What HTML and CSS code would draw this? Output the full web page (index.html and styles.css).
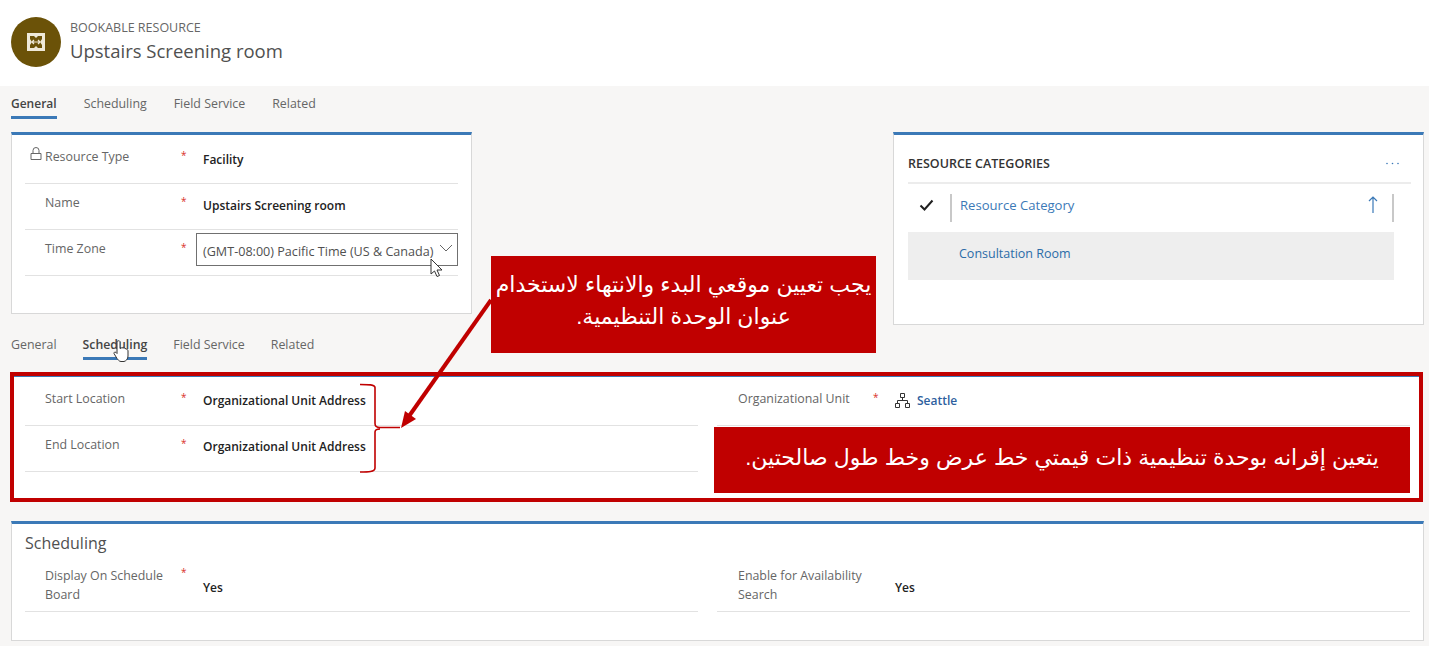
FILE: index.html
```html
<!DOCTYPE html>
<html lang="en">
<head>
  <meta charset="UTF-8">
  <title>Bookable Resource</title>
  <link rel="stylesheet" href="styles.css">
</head>
<body>

  <header class="page-header">
    <div class="avatar">
      <svg width="18" height="18" viewBox="0 0 18 18">
        <rect width="18" height="18" fill="#efe9d8"/>
        <path d="M3 3h4l2 2 2-2h4v3l-2 3 2 3v3h-4l-2-2-2 2H3v-3l2-3-2-3z" fill="#6b5208"/>
        <path d="M5 9h8M5 9l2-2M5 9l2 2M13 9l-2-2M13 9l-2 2" stroke="#efe9d8" stroke-width="1.2" fill="none"/>
      </svg>
    </div>
    <div>
      <div class="entity">BOOKABLE RESOURCE</div>
      <div class="record">Upstairs Screening room</div>
    </div>
  </header>

  <nav class="tabs">
    <span class="tab active">General</span>
    <span class="tab">Scheduling</span>
    <span class="tab">Field Service</span>
    <span class="tab">Related</span>
  </nav>

  <div class="top-row">
    <section class="card general-card">
      <div class="row">
        <svg class="lock" width="12" height="14" viewBox="0 0 12 14">
          <path d="M3 6V3.500a3 3 0 0 1 6 0V6M1 6.500h10v6H1z" fill="none" stroke="#666" stroke-width="1"/>
        </svg>
        <span class="label">Resource Type</span><span class="star">*</span><span class="value">Facility</span>
      </div>
      <div class="row">
        <span class="label">Name</span><span class="star">*</span><span class="value">Upstairs Screening room</span>
      </div>
      <div class="row">
        <span class="label">Time Zone</span><span class="star">*</span>
        <div class="select">
          <span>(GMT-08:00) Pacific Time (US &amp; Canada)</span>
          <svg width="14" height="8" viewBox="0 0 14 8"><path d="M1 1l6 6 6-6" fill="none" stroke="#666"/></svg>
        </div>
      </div>
    </section>

    <section class="card categories-card">
      <div class="cat-head">
        <span class="cat-title">RESOURCE CATEGORIES</span>
        <svg class="more" width="13" height="3" viewBox="0 0 13 3">
          <circle cx="1" cy="1.500" r=".8" fill="#3b79b7"/><circle cx="6.500" cy="1.500" r=".8" fill="#3b79b7"/><circle cx="12" cy="1.500" r=".8" fill="#3b79b7"/>
        </svg>
      </div>
      <div class="cat-columns">
        <svg class="check" width="15" height="12" viewBox="0 0 15 12"><path d="M1.500 6.500l4 4 8-9" fill="none" stroke="#1f1f1f" stroke-width="2"/></svg>
        <span class="cat-name">Resource Category</span>
        <svg class="up" width="10" height="17" viewBox="0 0 10 17"><path d="M5 17V1M1 5l4-4 4 4" fill="none" stroke="#3b79b7" stroke-width="1.200"/></svg>
      </div>
      <div class="cat-item">Consultation Room</div>
    </section>
  </div>

  <nav class="tabs tabs-second">
    <span class="tab">General</span>
    <span class="tab active">Scheduling</span>
    <span class="tab">Field Service</span>
    <span class="tab">Related</span>
  </nav>

  <section class="locations">
    <div class="col">
      <div class="row">
        <span class="label">Start Location</span><span class="star">*</span><span class="value">Organizational Unit Address</span>
      </div>
      <div class="row">
        <span class="label">End Location</span><span class="star">*</span><span class="value">Organizational Unit Address</span>
      </div>
    </div>
    <div class="col">
      <div class="row row-right">
        <span class="label">Organizational Unit</span><span class="star">*</span>
        <span class="value link">
          <svg width="15" height="15" viewBox="0 0 15 15"><path d="M5.500 .5h4v4h-4zM.5 10.500h4v4h-4zM10.500 10.500h4v4h-4zM7.500 4.500v3M2.500 10.500v-3h10v3" fill="none" stroke="#333"/></svg>
          Seattle
        </span>
      </div>
    </div>
  </section>

  <section class="card scheduling-card">
    <h2>Scheduling</h2>
    <div class="two-cols">
      <div class="row tall">
        <span class="label">Display On Schedule Board</span><span class="star">*</span><span class="value">Yes</span>
      </div>
      <div class="row tall row-right">
        <span class="label">Enable for Availability Search</span><span class="star"></span><span class="value">Yes</span>
      </div>
    </div>
  </section>

  <!-- annotations drawn over the form -->
  <div class="callout callout-top" dir="rtl" lang="ar">يجب تعيين موقعي البدء والانتهاء لاستخدام<br>عنوان الوحدة التنظيمية.</div>
  <div class="callout callout-bottom" dir="rtl" lang="ar">يتعين إقرانه بوحدة تنظيمية ذات قيمتي خط عرض وخط طول صالحتين.</div>

  <svg class="overlay" width="1429" height="646" viewBox="0 0 1429 646">
    <!-- bracket -->
    <path d="M360 384.500c8 0 15 0 15 3v36c0 3 2 4 5 4h20M380 429c-3 0-5 1-5 3v36c0 4-7 4-15 4" fill="none" stroke="#c00000" stroke-width="1.600"/>
    <!-- arrow -->
    <path d="M491 300L407 419" stroke="#c00000" stroke-width="4" fill="none"/>
    <path d="M401 428l4-17 11 8z" fill="#c00000"/>
    <!-- pointer -->
    <path d="M431 259v15l3.500-3 2.500 5.500 2.500-1-2.500-5.500h5z" fill="#fff" stroke="#333"/>
    <!-- hand -->
    <path d="M117 341.500c1-1 2.500-1 3 0v7c1-1 5-1 6 .5 1 0 2 1 2 2v5c0 3-2 5-4 5.500h-3c-2 0-3-2-4-3l-3-5c-.5-1 1-2 2-1l1 1z" fill="#fff" stroke="#333"/>
  </svg>

</body>
</html>
```

FILE: styles.css
```css
body {
  margin: 0;
  width: 1429px;
  height: 646px;
  overflow: hidden;
  position: relative;
  background: #f7f6f5;
  font-family: "Open Sans", sans-serif;
  font-size: 12.4px;
  color: #666;
}

.page-header {
  height: 86px;
  background: #fff;
  display: flex;
  align-items: flex-start;
  gap: 9px;
  padding: 17px 0 0 11px;
  box-sizing: border-box;
}

.avatar {
  width: 50px;
  height: 50px;
  border-radius: 50%;
  background: #6b5208;
  display: flex;
  align-items: center;
  justify-content: center;
}

.entity {
  font-size: 12.5px;
  line-height: 20px;
  margin-top: 1px;
  color: #666;
}

.record {
  font-size: 18.5px;
  line-height: 25px;
  color: #505050;
}

.tabs {
  display: flex;
  gap: 27px;
  height: 46px;
  padding: 9px 0 0 11px;
  box-sizing: border-box;
}

.tabs-second {
  gap: 26px;
  height: 47px;
  padding-top: 11px;
}

.tab {
  height: 21px;
  line-height: 17px;
}

.tab.active {
  color: #444;
  font-weight: 600;
  font-size: 12px;
  border-bottom: 3px solid #3b79b7;
}

.tabs-second .tab.active {
  font-size: 12.300px;
}

.top-row {
  display: flex;
  justify-content: space-between;
  align-items: flex-start;
  padding: 0 5px 0 11px;
}

.card {
  background: #fff;
  border: 1px solid #d8d8d8;
  border-top: 3px solid #3b79b7;
  box-sizing: border-box;
}

.general-card {
  width: 461px;
  height: 182px;
  padding: 3px 13px 0;
}

.row {
  display: flex;
  align-items: flex-start;
  height: 46px;
  padding-left: 20px;
  box-sizing: border-box;
  border-bottom: 1px solid #e2e2e2;
  position: relative;
  line-height: 18px;
}

.row-right {
  padding-left: 21px;
}

.row-right .label {
  width: 135px;
}

.lock {
  position: absolute;
  left: 5px;
  top: 9px;
}

.label {
  width: 136px;
  flex: none;
  padding-top: 10px;
}

.star {
  width: 22px;
  flex: none;
  color: #d9302a;
  font-size: 10px;
  padding-top: 8px;
}

.value {
  font-size: 12px;
  color: #222;
  font-weight: 600;
  padding-top: 13px;
  display: flex;
  align-items: flex-start;
  gap: 7px;
}

.value.link {
  color: #2f5f9e;
}

.value svg {
  margin-top: 1px;
}

.select {
  flex: 1;
  height: 33px;
  margin: 3px 0 0 -7px;
  border: 1px solid #707070;
  box-sizing: border-box;
  display: flex;
  justify-content: space-between;
  padding: 9px 4px 0 6px;
  font-size: 12.600px;
  color: #505050;
}

.select svg {
  margin-top: 1px;
}

.categories-card {
  width: 531px;
  height: 193px;
  padding: 0 12px 0 14px;
}

.cat-head {
  display: flex;
  justify-content: space-between;
  height: 49px;
  padding-top: 20px;
  box-sizing: border-box;
  border-bottom: 2px solid #ececec;
  color: #333;
  font-size: 12.500px;
  font-weight: 600;
}

.more {
  margin: 7px 12px 0 0;
}

.cat-columns {
  display: flex;
  align-items: flex-start;
  width: 486px;
  height: 28px;
  margin-top: 10px;
  box-sizing: border-box;
  border-right: 2px solid #c8c8c8;
  padding-left: 11px;
}

.check {
  flex: none;
  margin: 5px 16px 0 0;
}

.cat-name {
  flex: 1;
  border-left: 2px solid #c8c8c8;
  height: 28px;
  line-height: 23px;
  padding-left: 8px;
  font-size: 13.100px;
  color: #3b79b7;
}

.up {
  margin: 2px 14px 0 0;
}

.cat-item {
  width: 486px;
  height: 48px;
  margin-top: 10px;
  line-height: 44px;
  padding-left: 51px;
  box-sizing: border-box;
  background: #eee;
  font-size: 12.500px;
  color: #2b6ca8;
}

.locations {
  margin-left: 10px;
  width: 1413px;
  height: 130px;
  box-sizing: border-box;
  border: 4px solid #c00000;
  background: #fff;
  box-shadow: inset 0 1px #3b79b7;
  padding: 4px 9px 0 11px;
  display: grid;
  grid-template-columns: 673px 693px;
  gap: 19px;
}

.locations .value {
  padding-top: 12px;
}

.scheduling-card {
  margin: 19px 0 0 11px;
  width: 1413px;
  height: 120px;
  padding: 0 13px;
}

.scheduling-card h2 {
  margin: 0;
  font-size: 16px;
  font-weight: 400;
  line-height: 24px;
  padding-top: 7px;
  color: #505050;
}

.two-cols {
  display: grid;
  grid-template-columns: 673px 693px;
  gap: 19px;
}

.row.tall {
  height: 49px;
  margin-top: 8px;
}

.row.tall .label {
  padding-top: 3px;
  line-height: 19px;
}

.row.tall .star {
  padding-top: 0;
}

.row.tall .value {
  padding-top: 16px;
}

.callout {
  position: absolute;
  background: #c00000;
  color: #fff;
  font-family: "Liberation Sans", "DejaVu Sans", sans-serif;
  text-align: center;
  box-sizing: border-box;
}

.callout-top {
  left: 491px;
  top: 256px;
  width: 385px;
  height: 97px;
  font-size: 22px;
  line-height: 32px;
  padding-top: 13px;
  white-space: nowrap;
}

.callout-bottom {
  left: 714px;
  top: 427px;
  width: 696px;
  height: 66px;
  font-size: 22px;
  line-height: 62px;
}

.overlay {
  position: absolute;
  left: 0;
  top: 0;
  pointer-events: none;
}
```
